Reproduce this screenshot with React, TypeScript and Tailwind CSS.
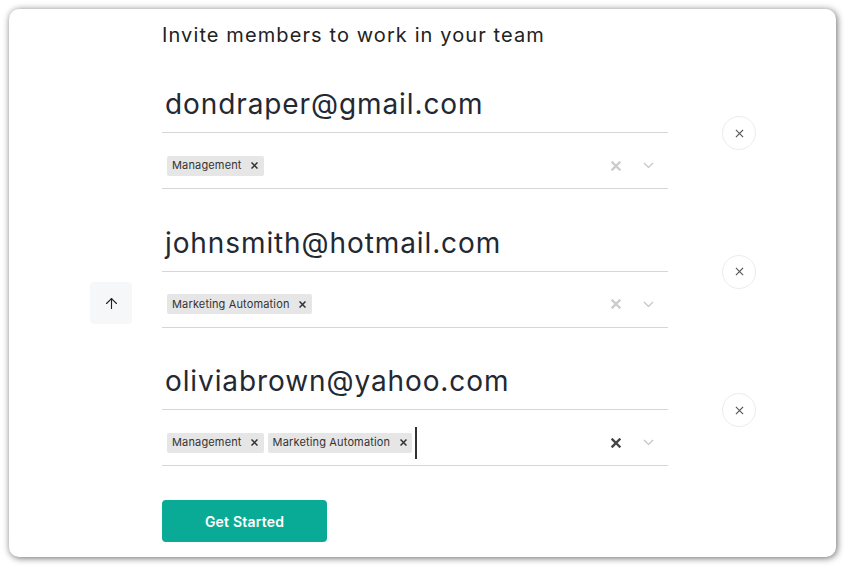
import React from "react";
import { ArrowUp } from "lucide-react";

const font = { fontFamily: "Inter, 'Noto Sans', sans-serif" };

function SmallX({ className = "", size = 8, stroke = 2 }: { className?: string; size?: number; stroke?: number }) {
  return (
    <svg width={size} height={size} viewBox="0 0 10 10" className={className} fill="none" stroke="currentColor" strokeWidth={stroke} strokeLinecap="square">
      <path d="M1.5 1.5 L8.5 8.5 M8.5 1.5 L1.5 8.5" />
    </svg>
  );
}

function Chevron() {
  return (
    <svg width="11" height="7" viewBox="0 0 11 7" fill="none" stroke="#c4c4c4" strokeWidth="1.2">
      <path d="M1 1 L5.5 5.5 L10 1" />
    </svg>
  );
}

function Tag({ label }: { label: string }) {
  return (
    <div className="flex h-[20px] items-center rounded-[2px] bg-[#e6e6e6]">
      <span className="pl-[5px] pr-[7px] text-[11px] tracking-[0.15px] text-[#333]">{label}</span>
      <span className="flex w-[15px] items-center justify-center pr-[3px] text-[#333]">
        <SmallX size={7} stroke={2.2} />
      </span>
    </div>
  );
}

function Block({ email, tags, focused }: { email: string; tags: string[]; focused?: boolean }) {
  return (
    <div className="flex items-center">
      <div className="w-[506px]">
        <div className="flex h-[56px] items-center border-b border-[#d6d6d6] pb-[1px] pl-[3px] text-[28px] leading-none tracking-[0.9px] text-[#232833]">
          {email}
        </div>
        <div className="flex h-[56px] items-center border-b border-[#d6d6d6] pt-[10px]">
          <div className="flex flex-1 items-center gap-[4px] pl-[5px]">
            {tags.map((t) => (
              <Tag key={t} label={t} />
            ))}
            {focused && <div className="-ml-[1px] h-[32px] w-[2px] bg-[#333]" />}
          </div>
          <div className={`flex w-[24px] items-center justify-center ${focused ? "text-[#444]" : "text-[#cccccc]"}`}>
            <SmallX size={10} stroke={2.4} />
          </div>
          <div className="flex w-[40px] items-center justify-center">
            <Chevron />
          </div>
        </div>
      </div>
      <div className="ml-[54px] flex h-[34px] w-[34px] items-center justify-center rounded-full border border-[#ececec] text-[#555]">
        <SmallX size={9} stroke={1.3} />
      </div>
    </div>
  );
}

export default function App() {
  return (
    <div className="h-[566px] w-[844px] bg-white p-[9px]" style={font}>
      <div className="relative h-[548px] w-[827px] rounded-[10px] bg-white pl-[153px] pt-[14px] shadow-[1px_1px_7px_rgba(0,0,0,0.6)]">
        <div className="h-[24px] text-[20px] leading-[24px] tracking-[1.1px] text-[#222]">
          Invite members to work in your team
        </div>
        <div className="mt-[30px] flex flex-col gap-[26.5px]">
          <Block email="dondraper@gmail.com" tags={["Management"]} />
          <Block email="johnsmith@hotmail.com" tags={["Marketing Automation"]} />
          <Block email="oliviabrown@yahoo.com" tags={["Management", "Marketing Automation"]} focused />
        </div>
        <button className="mt-[34px] flex h-[42px] w-[165px] items-center justify-center rounded-[4px] bg-[#0aab96] text-[14px] font-semibold tracking-[0.2px] text-white">
          Get Started
        </button>
        <div className="absolute left-[81px] top-[273px] flex h-[42px] w-[42px] items-center justify-center rounded-[4px] bg-[#f6f7f9] text-[#222]">
          <ArrowUp size={17} strokeWidth={1.6} />
        </div>
      </div>
    </div>
  );
}
